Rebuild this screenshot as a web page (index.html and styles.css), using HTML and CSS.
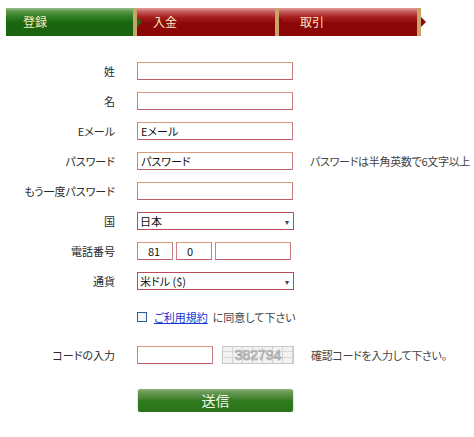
FILE: index.html
```html
<!DOCTYPE html>
<html lang="ja">
<head>
<meta charset="utf-8">
<title>登録</title>
<link rel="stylesheet" href="styles.css">
</head>
<body>
<div class="tabs">
  <div class="tab tab-green tab-1">登録</div>
  <div class="tab tab-red tab-2">入金</div>
  <div class="tab tab-red tab-3">取引</div>
</div>

<div class="form">
  <div class="row">
    <div class="label">姓</div>
    <div class="field"><input class="text" type="text" value=""></div>
  </div>
  <div class="row">
    <div class="label">名</div>
    <div class="field"><input class="text" type="text" value=""></div>
  </div>
  <div class="row">
    <div class="label">Eメール</div>
    <div class="field"><input class="text" type="text" value="Eメール"></div>
  </div>
  <div class="row">
    <div class="label">パスワード</div>
    <div class="field"><input class="text" type="text" value="パスワード"></div>
    <div class="note">パスワードは半角英数で6文字以上</div>
  </div>
  <div class="row">
    <div class="label">もう一度パスワード</div>
    <div class="field"><input class="text" type="text" value=""></div>
  </div>
  <div class="row">
    <div class="label">国</div>
    <div class="field"><div class="select"><span>日本</span><span class="arrow">▾</span></div></div>
  </div>
  <div class="row">
    <div class="label">電話番号</div>
    <div class="field phone">
      <input class="text code1" type="text" value="81">
      <input class="text code2" type="text" value="0">
      <input class="text code3" type="text" value="">
    </div>
  </div>
  <div class="row">
    <div class="label">通貨</div>
    <div class="field"><div class="select"><span>米ドル (&#36;)</span><span class="arrow">▾</span></div></div>
  </div>
  <div class="row row-agree">
    <div class="label"></div>
    <div class="field agree">
      <span class="checkbox"></span>
      <a class="terms" href="#">ご利用規約</a>
      <span class="agree-text">に同意して下さい</span>
    </div>
  </div>
  <div class="row row-code">
    <div class="label">コードの入力</div>
    <div class="field captcha-field">
      <input class="text captcha-input" type="text" value="">
      <div class="captcha"><span>382794</span></div>
    </div>
    <div class="note">確認コードを入力して下さい。</div>
  </div>
  <div class="row row-submit">
    <div class="label"></div>
    <div class="field"><button class="submit" type="button">送信</button></div>
  </div>
</div>
</body>
</html>
```

FILE: styles.css
```css
* {
  box-sizing: border-box;
}

body {
  margin: 0;
  background: #ffffff;
  font-family: "Noto Sans CJK JP", "Liberation Sans", sans-serif;
  font-size: 11px;
  color: #2a2a2a;
  font-feature-settings: "palt";
}

.tabs {
  display: flex;
  padding: 8px 0 0 6px;
}

.tab {
  position: relative;
  height: 28px;
  line-height: 28px;
  font-size: 12px;
  color: #f6ecc4;
  border-right: 4px solid #c8a468;
}

.tab::after {
  content: "";
  position: absolute;
  right: -9px;
  top: 9px;
  border-top: 5px solid transparent;
  border-bottom: 5px solid transparent;
  border-left: 5px solid #1f6a12;
  z-index: 2;
}

.tab-green {
  background: linear-gradient(#9ebc8e 0, #5f9a4c 3px, #2f7d22 9px, #1a6510 15px, #1a640f 100%);
}

.tab-red {
  background: linear-gradient(#e2a2a2 0, #c86464 3px, #a82020 9px, #8c0808 15px, #8c0707 100%);
}

.tab-red::after {
  border-left-color: #8c0808;
}

.tab-1 {
  width: 131px;
  padding-left: 17px;
}

.tab-2 {
  width: 142px;
  padding-left: 16px;
}

.tab-3 {
  width: 142px;
  padding-left: 21px;
}

.form {
  display: flex;
  flex-direction: column;
  margin-top: 20px;
}

.row {
  display: flex;
  align-items: center;
  height: 30px;
}

.label {
  width: 115px;
  flex: none;
  text-align: right;
  white-space: nowrap;
}

.field {
  display: flex;
  align-items: center;
  margin-left: 22px;
  flex: none;
}

.note {
  margin-left: 17px;
  white-space: nowrap;
  letter-spacing: -0.3px;
  color: #444444;
}

.text {
  height: 18px;
  width: 156px;
  margin: 0;
  padding: 0 3px;
  border: 1px solid;
  border-color: #d99a82 #c8787f #c0606e #c98288;
  background: #ffffff;
  font-family: "Noto Sans CJK JP", "Liberation Sans", sans-serif;
  font-size: 11px;
  font-feature-settings: "palt";
  color: #111111;
  outline: none;
}

.select {
  display: flex;
  align-items: center;
  justify-content: space-between;
  width: 157px;
  height: 18px;
  padding: 0 4px 0 2px;
  border: 1px solid #b84a5c;
  background: #ffffff;
  color: #111111;
}

.arrow {
  font-size: 8px;
  color: #444444;
}

.phone {
  gap: 3px;
}

.code1,
.code2 {
  width: 36px;
  padding-left: 10px;
}

.code3 {
  width: 76px;
}

.row-agree {
  height: 42px;
}

.agree {
  gap: 5px;
  white-space: nowrap;
}

.checkbox {
  width: 10px;
  height: 10px;
  border: 1px solid #2f5a8c;
  background: #f4f6fa;
  margin-right: 2px;
}

.terms {
  color: #1a35d0;
  text-decoration: underline;
}

.agree-text {
  color: #444444;
}

.row-code {
  height: 34px;
}

.captcha-field {
  gap: 9px;
}

.captcha-input {
  width: 76px;
}

.captcha {
  display: flex;
  align-items: center;
  justify-content: center;
  width: 72px;
  height: 18px;
  border: 1px solid #c8c8c8;
  background-color: #f2f2f2;
  background-image:
    repeating-linear-gradient(90deg, transparent 0, transparent 9px, #d4d4d4 9px, #d4d4d4 10px),
    repeating-linear-gradient(0deg, transparent 0, transparent 5px, #dadada 5px, #dadada 6px);
}

.captcha span {
  font-family: "Liberation Sans", sans-serif;
  font-size: 14px;
  color: #f2f2f2;
  -webkit-text-stroke: 0.7px #9a9a9a;
}

.row-submit {
  height: auto;
  align-items: flex-start;
  padding-top: 17px;
}

.submit {
  width: 155px;
  height: 23px;
  margin: 0 0 0 1px;
  padding: 0;
  border: none;
  border-radius: 2px;
  background: linear-gradient(#8fb27e 0, #6a9a56 3px, #4e8a3a 8px, #2f7a1e 12px, #2a7319 100%);
  box-shadow: 0 1px 2px rgba(0, 0, 0, 0.35);
  font-family: "Noto Sans CJK JP", "Liberation Sans", sans-serif;
  font-size: 14px;
  color: #f4f4ea;
  line-height: 23px;
}
```
